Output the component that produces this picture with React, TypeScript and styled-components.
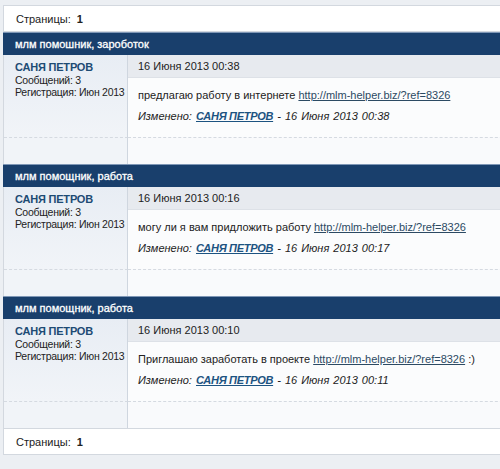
import styled, { createGlobalStyle } from 'styled-components'

const GlobalStyle = createGlobalStyle`
  html, body {
    margin: 0;
    padding: 0;
    background: #eceff3;
    overflow: hidden;
  }
  body {
    font-family: 'Liberation Sans', Arial, sans-serif;
    font-size: 11px;
    color: #222;
  }
`

type Post = {
  title: string
  date: string
  text: string
  tail?: string
  edited: string
}

const posts: Post[] = [
  {
    title: 'млм помошник, зароботок',
    date: '16 Июня 2013 00:38',
    text: 'предлагаю работу в интернете ',
    edited: '16 Июня 2013 00:38',
  },
  {
    title: 'млм помощник, работа',
    date: '16 Июня 2013 00:16',
    text: 'могу ли я вам придложить работу ',
    edited: '16 Июня 2013 00:17',
  },
  {
    title: 'млм помощник, работа',
    date: '16 Июня 2013 00:10',
    text: 'Приглашаю заработать в проекте ',
    tail: ' :)',
    edited: '16 Июня 2013 00:11',
  },
]

const Pages = () => (
  <PagesBar>
    Страницы:<PageNum>1</PageNum>
  </PagesBar>
)

export default function App() {
  return (
    <>
      <GlobalStyle />
      <Wrapper>
        <Pages />
        {posts.map((post, i) => (
          <PostBlock key={i}>
            <PostTitle>{post.title}</PostTitle>
            <PostGrid>
              <UserCell>
                <UserName>САНЯ ПЕТРОВ</UserName>
                <UserMeta>Сообщений: 3</UserMeta>
                <UserMeta>Регистрация: Июн 2013</UserMeta>
              </UserCell>
              <ContentCell>
                <DateBar>{post.date}</DateBar>
                <Message>
                  {post.text}
                  <Link>http://mlm-helper.biz/?ref=8326</Link>
                  {post.tail}
                </Message>
                <Edited>
                  Изменено: <EditedName>САНЯ ПЕТРОВ</EditedName> - {post.edited}
                </Edited>
              </ContentCell>
              <FooterLeft />
              <FooterRight />
            </PostGrid>
          </PostBlock>
        ))}
        <Pages />
      </Wrapper>
    </>
  )
}

const Wrapper = styled.div`
  margin: 5px 0 0 3px;
  width: 520px;
  display: flex;
  flex-direction: column;
`

const PagesBar = styled.div`
  height: 27px;
  box-sizing: border-box;
  background: #ffffff;
  border: 1px solid #d3d8df;
  display: flex;
  align-items: center;
  padding-left: 12px;
  font-size: 11px;
  color: #222;
`

const PageNum = styled.b`
  margin-left: 6px;
  font-size: 11px;
`

const PostBlock = styled.div`
  display: flex;
  flex-direction: column;
`

const PostTitle = styled.div`
  height: 23px;
  box-sizing: border-box;
  background: #193f6c;
  border-top: 1px solid #7f97b6;
  color: #ffffff;
  font-size: 11px;
  -webkit-text-stroke: 0.3px #ffffff;
  padding-left: 12px;
  display: flex;
  align-items: center;
`

const PostGrid = styled.div`
  display: grid;
  grid-template-columns: 124px 1fr;
  grid-template-rows: 82px 27px;
  border-left: 1px solid #d3d8df;
`

const UserCell = styled.div`
  background: linear-gradient(#e8edf4, #f1f4f8);
  border-right: 1px solid #cfd6df;
  padding: 6px 0 0 11px;
  display: flex;
  flex-direction: column;
  white-space: nowrap;
`

const UserName = styled.div`
  font-weight: bold;
  font-size: 11px;
  letter-spacing: -0.2px;
  color: #1d4b74;
  line-height: 13px;
`

const UserMeta = styled.div`
  font-size: 10.5px;
  letter-spacing: -0.25px;
  line-height: 12px;
  color: #222;
`

const ContentCell = styled.div`
  background: #fbfcfd;
  display: flex;
  flex-direction: column;
`

const DateBar = styled.div`
  height: 23px;
  box-sizing: border-box;
  background: #e7eaef;
  border-bottom: 1px solid #dde1e7;
  padding-left: 10px;
  display: flex;
  align-items: center;
  font-size: 11px;
  color: #222;
`

const Message = styled.div`
  padding: 11px 0 0 10px;
  line-height: 13px;
  color: #222;
`

const Link = styled.a`
  color: #2c4a63;
  text-decoration: underline;
`

const Edited = styled.div`
  padding: 8px 0 0 10px;
  font-style: italic;
  line-height: 13px;
  color: #222;
  word-spacing: 1px;
`

const EditedName = styled.a`
  font-weight: bold;
  letter-spacing: -0.3px;
  word-spacing: 0;
  color: #1c5381;
  text-decoration: underline;
`

const FooterLeft = styled.div`
  background: #f1f4f8;
  border-top: 1px dashed #d5dae1;
  border-right: 1px solid #cfd6df;
`

const FooterRight = styled.div`
  background: #f9fafc;
  border-top: 1px dashed #d5dae1;
`
